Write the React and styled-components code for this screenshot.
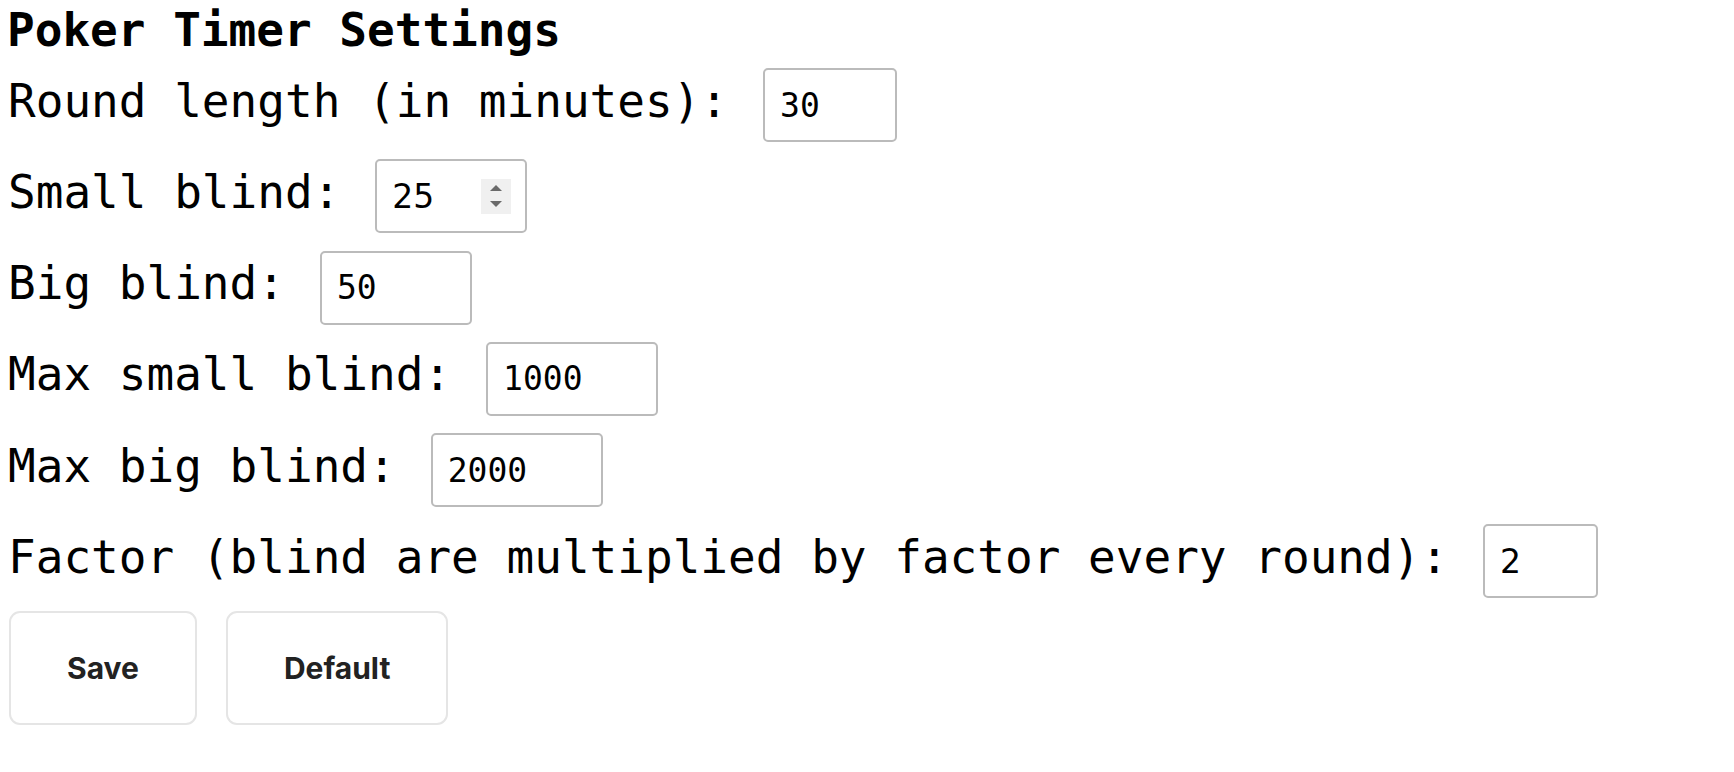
import React, { useState } from 'react';
import styled, { createGlobalStyle } from 'styled-components';

const GlobalStyle = createGlobalStyle`
  body {
    margin: 0;
    background: #fff;
  }
`;

const Page = styled.div`
  padding: 3px 8px 0;
  font-family: "DejaVu Sans Mono", monospace;
  color: #000;
`;

const Title = styled.h1`
  margin: 0 0 11px -1px;
  font-size: 46px;
  font-weight: bold;
  line-height: normal;
`;

const Form = styled.div`
  display: flex;
  flex-direction: column;
  gap: 17.3px;
`;

const Row = styled.div`
  display: flex;
  align-items: baseline;
  gap: 35px;
  font-size: 46px;
`;

const Label = styled.label`
  white-space: pre;
`;

const Field = styled.div`
  display: inline-flex;
  align-items: center;
  box-sizing: border-box;
  width: ${(p) => p.$width}px;
  height: 74px;
  padding: 0 14px 0 15px;
  border: 2px solid #bbb;
  border-radius: 5px;
  background: #fff;
`;

const Input = styled.input`
  flex: 1;
  min-width: 0;
  padding: 0;
  border: none;
  outline: none;
  background: transparent;
  color: #000;
  font-family: ${(p) => (p.$sans ? '"DejaVu Sans", sans-serif' : '"DejaVu Sans Mono", monospace')};
  font-size: 33px;
`;

const Spinner = styled.div`
  display: flex;
  flex-direction: column;
  align-items: center;
  justify-content: center;
  gap: 10px;
  width: 30px;
  height: 35px;
  background: #f0f0f0;
`;

const Arrow = styled.span`
  width: 0;
  height: 0;
  border-left: 6.5px solid transparent;
  border-right: 6.5px solid transparent;
  ${(p) => (p.$down ? 'border-top: 6px solid #6a6a6a;' : 'border-bottom: 6px solid #6a6a6a;')}
`;

const Buttons = styled.div`
  display: flex;
  gap: 29px;
  margin-top: 13px;
  padding-left: 1px;
`;

const Button = styled.button`
  height: 114px;
  padding: 0 56px;
  border: 2px solid #e5e5e5;
  border-radius: 11px;
  background: #fff;
  color: #222;
  font-family: Inter, "Liberation Sans", sans-serif;
  font-weight: 700;
  font-size: 30px;
  cursor: pointer;
`;

const defaults = {
  round: '30',
  small: '25',
  big: '50',
  maxSmall: '1000',
  maxBig: '2000',
  factor: '2',
};

const fields = [
  { key: 'round', label: 'Round length (in minutes):', width: 134 },
  { key: 'small', label: 'Small blind:', width: 152, sans: true, spinner: true },
  { key: 'big', label: 'Big blind:', width: 152 },
  { key: 'maxSmall', label: 'Max small blind:', width: 172 },
  { key: 'maxBig', label: 'Max big blind:', width: 172 },
  { key: 'factor', label: 'Factor (blind are multiplied by factor every round):', width: 115, sans: true },
];

const App = () => {
  const [values, setValues] = useState(defaults);

  const update = (key) => (e) => setValues({ ...values, [key]: e.target.value });

  return (
    <>
      <GlobalStyle />
      <Page>
        <Title>Poker Timer Settings</Title>
        <Form>
          {fields.map((f) => (
            <Row key={f.key}>
              <Label htmlFor={f.key}>{f.label}</Label>
              <Field $width={f.width}>
                <Input id={f.key} $sans={f.sans} value={values[f.key]} onChange={update(f.key)} />
                {f.spinner && (
                  <Spinner>
                    <Arrow />
                    <Arrow $down />
                  </Spinner>
                )}
              </Field>
            </Row>
          ))}
        </Form>
        <Buttons>
          <Button>Save</Button>
          <Button onClick={() => setValues(defaults)}>Default</Button>
        </Buttons>
      </Page>
    </>
  );
};

export default App;
